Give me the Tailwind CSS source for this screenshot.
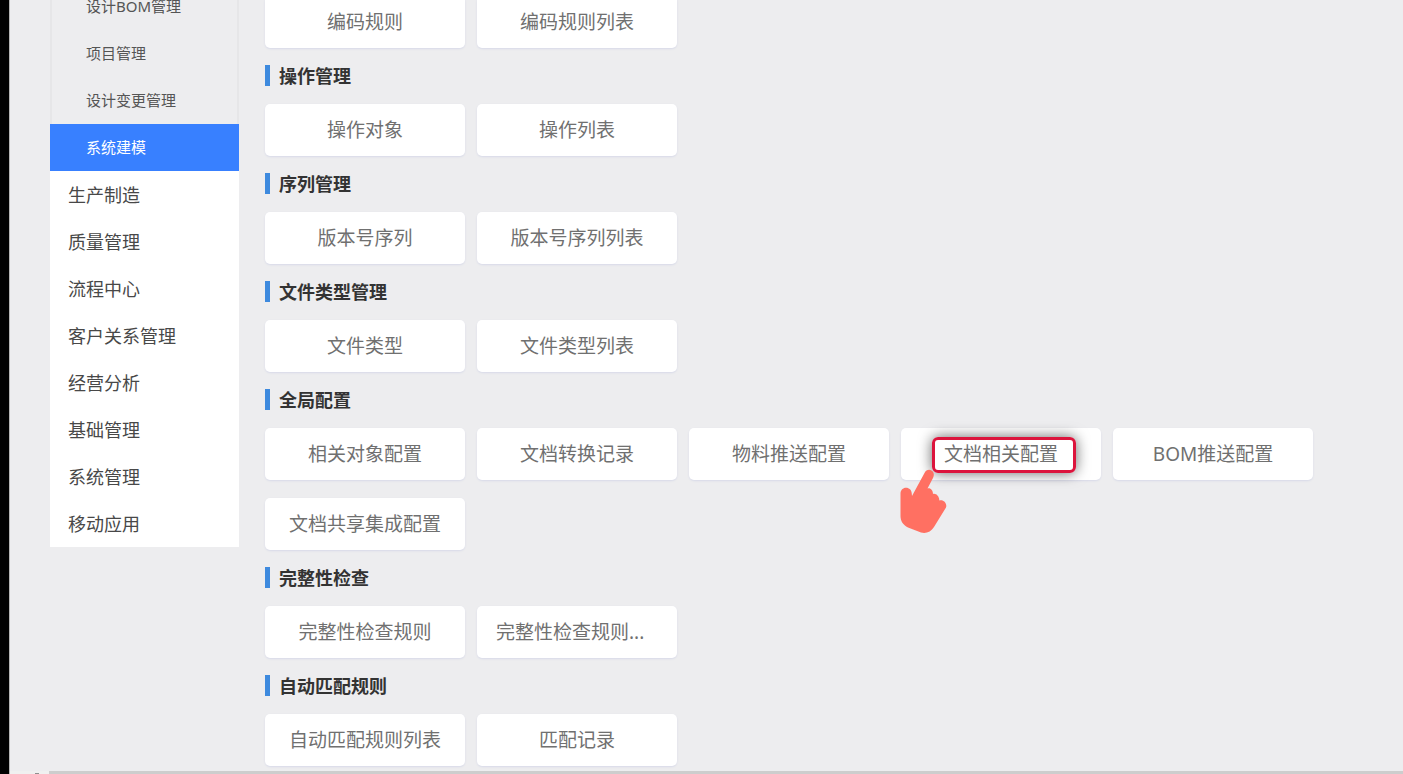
<!doctype html>
<html lang="zh-CN">
<head>
    <meta charset="UTF-8">
    <meta name="viewport" content="width=device-width, initial-scale=1.0">
    <title>系统建模</title>
    <script src="https://cdn.jsdelivr.net/npm/@tailwindcss/browser@4"></script>
</head>
<body class="bg-[#ededef] font-['Noto_Sans','Noto_Sans_CJK_SC',sans-serif] overflow-hidden">

<div class="flex min-h-screen border-l-9 border-black">
    <div class="flex flex-col flex-1 border-l border-[#b4b4b4]">

        <div class="flex flex-1 items-start pl-10 pb-1">
            <!-- Sidebar -->
            <nav class="w-[189px] shrink-0 -mt-[17px] text-lg text-[#484848]">
                <ul class="border-x-2 border-[#e6e6e8] text-[15px] text-[#555]">
                    <li><a href="#" class="flex items-center h-[47px] pl-[34px]">设计BOM管理</a></li>
                    <li><a href="#" class="flex items-center h-[47px] pl-[34px]">项目管理</a></li>
                    <li><a href="#" class="flex items-center h-[47px] pl-[34px]">设计变更管理</a></li>
                </ul>
                <a href="#" class="flex items-center h-[47px] pl-9 text-[15px] bg-[#3880ff] text-white">系统建模</a>
                <ul class="bg-white">
                    <li><a href="#" class="flex items-center h-[47px] pl-[18px]">生产制造</a></li>
                    <li><a href="#" class="flex items-center h-[47px] pl-[18px]">质量管理</a></li>
                    <li><a href="#" class="flex items-center h-[47px] pl-[18px]">流程中心</a></li>
                    <li><a href="#" class="flex items-center h-[47px] pl-[18px]">客户关系管理</a></li>
                    <li><a href="#" class="flex items-center h-[47px] pl-[18px]">经营分析</a></li>
                    <li><a href="#" class="flex items-center h-[47px] pl-[18px]">基础管理</a></li>
                    <li><a href="#" class="flex items-center h-[47px] pl-[18px]">系统管理</a></li>
                    <li><a href="#" class="flex items-center h-[47px] pl-[18px]">移动应用</a></li>
                </ul>
            </nav>

            <!-- Module cards -->
            <main class="flex flex-col flex-1 gap-[17px] -mt-1 pl-[26px] text-[19px] text-[#707070]">
                <section class="flex flex-wrap gap-x-3 gap-y-[18px]">
                    <button class="w-[200px] h-[52px] rounded-[5px] bg-white shadow-[0_1px_2px_#d8dae8]">编码规则</button>
                    <button class="w-[200px] h-[52px] rounded-[5px] bg-white shadow-[0_1px_2px_#d8dae8]">编码规则列表</button>
                </section>

                <section>
                    <h2 class="flex items-center h-[21px] mb-[18px] pl-[9px] border-l-5 border-[#3e8ade] text-lg font-bold text-[#333]">操作管理</h2>
                    <div class="flex flex-wrap gap-x-3 gap-y-[18px]">
                        <button class="w-[200px] h-[52px] rounded-[5px] bg-white shadow-[0_1px_2px_#d8dae8]">操作对象</button>
                        <button class="w-[200px] h-[52px] rounded-[5px] bg-white shadow-[0_1px_2px_#d8dae8]">操作列表</button>
                    </div>
                </section>

                <section>
                    <h2 class="flex items-center h-[21px] mb-[18px] pl-[9px] border-l-5 border-[#3e8ade] text-lg font-bold text-[#333]">序列管理</h2>
                    <div class="flex flex-wrap gap-x-3 gap-y-[18px]">
                        <button class="w-[200px] h-[52px] rounded-[5px] bg-white shadow-[0_1px_2px_#d8dae8]">版本号序列</button>
                        <button class="w-[200px] h-[52px] rounded-[5px] bg-white shadow-[0_1px_2px_#d8dae8]">版本号序列列表</button>
                    </div>
                </section>

                <section>
                    <h2 class="flex items-center h-[21px] mb-[18px] pl-[9px] border-l-5 border-[#3e8ade] text-lg font-bold text-[#333]">文件类型管理</h2>
                    <div class="flex flex-wrap gap-x-3 gap-y-[18px]">
                        <button class="w-[200px] h-[52px] rounded-[5px] bg-white shadow-[0_1px_2px_#d8dae8]">文件类型</button>
                        <button class="w-[200px] h-[52px] rounded-[5px] bg-white shadow-[0_1px_2px_#d8dae8]">文件类型列表</button>
                    </div>
                </section>

                <section>
                    <h2 class="flex items-center h-[21px] mb-[18px] pl-[9px] border-l-5 border-[#3e8ade] text-lg font-bold text-[#333]">全局配置</h2>
                    <div class="flex flex-wrap gap-x-3 gap-y-[18px]">
                        <button class="w-[200px] h-[52px] rounded-[5px] bg-white shadow-[0_1px_2px_#d8dae8]">相关对象配置</button>
                        <button class="w-[200px] h-[52px] rounded-[5px] bg-white shadow-[0_1px_2px_#d8dae8]">文档转换记录</button>
                        <button class="w-[200px] h-[52px] rounded-[5px] bg-white shadow-[0_1px_2px_#d8dae8]">物料推送配置</button>
                        <div class="relative">
                            <button class="w-[200px] h-[52px] rounded-[5px] bg-white shadow-[0_1px_2px_#d8dae8]">文档相关配置</button>
                            <!-- highlight frame and pointing hand -->
                            <div class="absolute left-[31px] top-[9px] w-36 h-9 rounded-md border-3 border-[#dc143c] shadow-[0_0_14px_rgba(0,0,0,0.6)] pointer-events-none"></div>
                            <svg class="absolute -left-px top-[41px] w-[47px] h-[65px] pointer-events-none" viewBox="0 0 47 65" fill="#ff7062">
                                <path d="M0.500 24.500C0.500 21 3 18.700 6 18.700C9.300 18.700 11.500 21 11.700 24L12 27L24.500 4C26 1 29 0 31.500 1.500C34 3 34.500 6 33 9L27.500 19.500C30.500 18.500 33 21.500 33 25C36 24 39.500 27.500 39.300 31.500C43 30 47.500 34 46 38.500L34 58C31 63 26 64.800 21 63.500L8 58.500C3 56 0.500 52 0.500 47Z"/>
                            </svg>
                        </div>
                        <button class="w-[200px] h-[52px] rounded-[5px] bg-white shadow-[0_1px_2px_#d8dae8]">BOM推送配置</button>
                        <button class="w-[200px] h-[52px] rounded-[5px] bg-white shadow-[0_1px_2px_#d8dae8]">文档共享集成配置</button>
                    </div>
                </section>

                <section>
                    <h2 class="flex items-center h-[21px] mb-[18px] pl-[9px] border-l-5 border-[#3e8ade] text-lg font-bold text-[#333]">完整性检查</h2>
                    <div class="flex flex-wrap gap-x-3 gap-y-[18px]">
                        <button class="w-[200px] h-[52px] rounded-[5px] bg-white shadow-[0_1px_2px_#d8dae8]">完整性检查规则</button>
                        <button class="w-[200px] h-[52px] px-[19px] rounded-[5px] bg-white text-left shadow-[0_1px_2px_#d8dae8]">完整性检查规则...</button>
                    </div>
                </section>

                <section>
                    <h2 class="flex items-center h-[21px] mb-[18px] pl-[9px] border-l-5 border-[#3e8ade] text-lg font-bold text-[#333]">自动匹配规则</h2>
                    <div class="flex flex-wrap gap-x-3 gap-y-[18px]">
                        <button class="w-[200px] h-[52px] rounded-[5px] bg-white shadow-[0_1px_2px_#d8dae8]">自动匹配规则列表</button>
                        <button class="w-[200px] h-[52px] rounded-[5px] bg-white shadow-[0_1px_2px_#d8dae8]">匹配记录</button>
                    </div>
                </section>
            </main>
        </div>

        <!-- Horizontal scrollbar, only its top edge is in view -->
        <div class="flex h-[3px] bg-[#f0f0f0]">
            <div class="flex items-end w-[39px] pl-[25px]">
                <span class="w-1 h-px bg-[#909090]"></span>
            </div>
            <div class="flex-1 bg-[#cdcdcd]"></div>
        </div>
    </div>
</div>

</body>
</html>
